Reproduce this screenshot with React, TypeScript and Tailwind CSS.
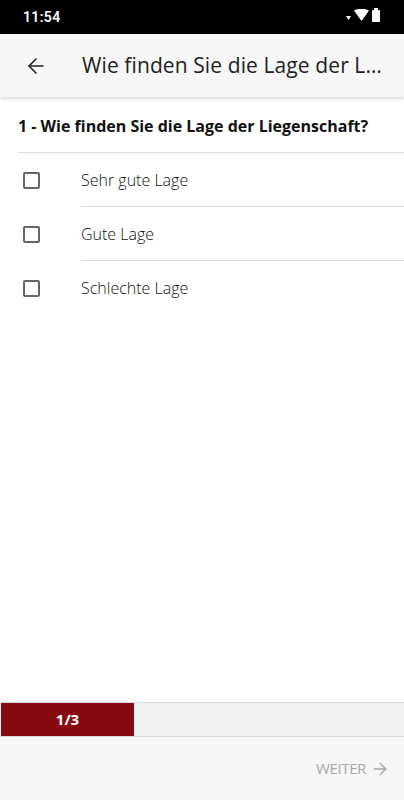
import React from "react";
import { ArrowLeft, ArrowRight } from "lucide-react";

const options = ["Sehr gute Lage", "Gute Lage", "Schlechte Lage"];

export default function App() {
  return (
    <div className="w-[404px] h-[800px] flex flex-col bg-white font-['Open_Sans',sans-serif] overflow-hidden">
      {/* status bar */}
      <div className="h-[34px] shrink-0 bg-black flex items-center justify-between pl-[23px] pr-[24px]">
        <span className="text-white text-[14px] font-semibold font-['Roboto',sans-serif] tracking-wide">11:54</span>
        <div className="flex items-end gap-[3px]">
          <svg width="5" height="4" viewBox="0 0 5 4" className="mb-[6px]"><path d="M0 0H5L2.5 4Z" fill="#fff" /></svg>
          <svg width="15" height="12" viewBox="0 0 15 12" className="mb-[5px]"><path d="M0 1.5Q7.5 -2 15 1.5L7.5 12Z" fill="#fff" /></svg>
          <div className="flex flex-col items-center mb-[4px]">
            <div className="w-[4px] h-[2px] bg-white" />
            <div className="w-[8px] h-[12px] bg-white rounded-[1px]" />
          </div>
        </div>
      </div>

      {/* toolbar */}
      <div className="h-[63px] shrink-0 bg-[#f7f7f7] flex items-center shadow-[0_2px_3px_rgba(0,0,0,0.15)] relative z-10">
        <div className="w-[82px] shrink-0 pl-[24px] flex items-center">
          <ArrowLeft size={24} strokeWidth={1.6} className="text-[#222]" />
        </div>
        <h1 className="text-[21px] text-[#222] whitespace-nowrap tracking-[0.1px]">
          Wie finden Sie die Lage der L…
        </h1>
      </div>

      {/* question */}
      <div className="flex-1 flex flex-col">
        <p className="pl-[18px] pt-[17px] pb-[14px] text-[16px] font-bold text-[#111]">
          1 - Wie finden Sie die Lage der Liegenschaft?
        </p>
        <div className="ml-[18px] border-t border-[#dcdcdc]">
          {options.map((o, i) => (
            <div key={o} className="flex items-stretch h-[54px]">
              <div className="w-[63px] flex items-center pl-[5px]">
                <div className="w-[17px] h-[17px] border-2 border-[#666] rounded-[2px]" />
              </div>
              <div className={`flex-1 flex items-center text-[16px] font-light text-[#111] ${i < options.length - 1 ? "border-b border-[#dcdcdc]" : ""}`}>
                {o}
              </div>
            </div>
          ))}
        </div>
      </div>

      {/* progress */}
      <div className="h-[35px] shrink-0 border-y border-[#dadada] bg-[#f2f2f2] flex">
        <div className="w-[133px] ml-[1px] bg-[#850b10] flex items-center justify-center text-white text-[15px] font-bold">
          1/3
        </div>
      </div>

      {/* footer */}
      <div className="h-[63px] shrink-0 bg-[#f7f7f7] flex items-center justify-end pr-[14px]">
        <span className="text-[15px] text-[#a8a8a8] tracking-tight">WEITER</span>
        <ArrowRight size={20} strokeWidth={1.6} className="text-[#a8a8a8] ml-[4px]" />
      </div>
    </div>
  );
}
